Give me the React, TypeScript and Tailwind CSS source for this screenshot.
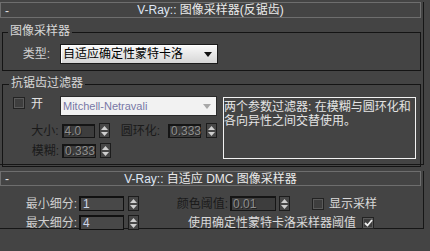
import React from "react";

const FONT = { fontFamily: '"Liberation Sans", "Noto Sans CJK SC", sans-serif' };

function SpinBtn() {
  return (
    <div className="w-[11px] h-[15px] border border-[#1c1c1c] bg-[#474747] flex flex-col items-center justify-center gap-[2px]">
      <svg width="7" height="4" viewBox="0 0 7 4">
        <polygon points="3.5,0 7,4 0,4" fill="#cfcfcf" />
      </svg>
      <svg width="7" height="4" viewBox="0 0 7 4">
        <polygon points="0,0 7,0 3.5,4" fill="#cfcfcf" />
      </svg>
    </div>
  );
}

function Arrow({ color }: { color: string }) {
  return (
    <svg width="8" height="5" viewBox="0 0 8 5">
      <polygon points="0,0 8,0 4,5" fill={color} />
    </svg>
  );
}

function CheckBox({ checked }: { checked?: boolean }) {
  return (
    <div className="w-[12px] h-[12px] border border-[#222] bg-[#3e3e3e] shadow-[inset_1px_1px_0_#5a5a5a,inset_-1px_-1px_0_#5a5a5a] flex items-center justify-center">
      {checked && (
        <svg width="9" height="8" viewBox="0 0 9 8">
          <polyline points="1,4 3.5,6.5 8,1" fill="none" stroke="#f0f0f0" strokeWidth="1.8" />
        </svg>
      )}
    </div>
  );
}

const dis = "text-[#1a1a1a]";

export default function App() {
  return (
    <div
      className="w-[430px] h-[251px] bg-[#444444] overflow-hidden text-[12px] leading-none text-[#d8d8d8]"
      style={FONT}
    >
      {/* Rollout 1 */}
      <div className="mt-[10px] w-[424px] h-[163px] border-r border-b border-[#161616]">
        <div className="-mt-[8px] w-[421px] h-[16px] border border-[#6e6e6e] relative flex items-center justify-center">
          <span className="absolute left-[4px] top-[2px] text-[#e0e0e0]">-</span>
          <span className="text-[#eaeaea]">
            <span className="text-[#dfe6f4]">V-Ray::</span> 图像采样器(反锯齿)
          </span>
        </div>

        {/* Group 1 */}
        <div className="ml-[2px] mt-[14px] w-[419px] h-[39px] border border-[#141414] relative">
          <span className="absolute -top-[8px] left-[5px] px-[2px] bg-[#444444] text-[#d8d8d8]">图像采样器</span>
          <div className="mt-[11px] flex items-center">
            <span className="w-[47px] text-right text-[#cfcfcf]">类型:</span>
            <div className="ml-[10px] w-[158px] h-[20px] border border-[#1a1a1a] bg-gradient-to-b from-[#fafafa] to-[#d6d6d6] flex items-center justify-between pl-[2px] pr-[5px] text-black shadow-[inset_1px_1px_0_#ffffff]">
              <span>自适应确定性蒙特卡洛</span>
              <Arrow color="#111111" />
            </div>
          </div>
        </div>

        {/* Group 2 */}
        <div className="ml-[2px] mt-[13px] w-[419px] h-[83px] border border-[#141414] relative flex">
          <span className="absolute -top-[8px] left-[6px] px-[2px] bg-[#444444] text-[#d8d8d8]">抗锯齿过滤器</span>
          <div className="w-[214px] flex flex-col">
            <div className="mt-[11px] h-[20px] flex items-start">
              <div className="ml-[10px] mt-[1px]">
                <CheckBox />
              </div>
              <span className="ml-[6px] mt-[2px] text-[#e2e2e2]">开</span>
              <div className="ml-[17px] w-[157px] h-[20px] border border-[#2a2a2a] bg-[#f2f2f2] flex items-center justify-between pl-[2px] pr-[5px] text-[#7878a6] text-[11px]">
                <span>Mitchell-Netravali</span>
                <Arrow color="#a8a8a8" />
              </div>
            </div>
            <div className="mt-[7px] h-[15px] flex items-center">
              <span className={`w-[56px] text-right ${dis}`}>大小:</span>
              <div className="ml-[3px] w-[34px] h-[14px] border-t-2 border-l-2 border-b border-r border-[#151515] bg-[#3d3d3d] flex items-center pl-[1px] text-[#8e8e8e] [text-shadow:1px_1px_0_#222222]">
                4.0
              </div>
              <div className="ml-[4px]">
                <SpinBtn />
              </div>
              <span className={`w-[50px] text-right ${dis}`}>圆环化:</span>
              <div className="ml-[8px] w-[33px] h-[14px] border-t-2 border-l-2 border-b border-r border-[#151515] bg-[#3d3d3d] flex items-center pl-[1px] text-[#8e8e8e] [text-shadow:1px_1px_0_#222222]">
                0.333
              </div>
              <div className="ml-[5px]">
                <SpinBtn />
              </div>
            </div>
            <div className="mt-[5px] h-[15px] flex items-center">
              <span className={`w-[56px] text-right ${dis}`}>模糊:</span>
              <div className="ml-[3px] w-[34px] h-[14px] border-t-2 border-l-2 border-b border-r border-[#151515] bg-[#3d3d3d] flex items-center pl-[1px] text-[#8e8e8e] [text-shadow:1px_1px_0_#222222]">
                0.333
              </div>
              <div className="ml-[4px]">
                <SpinBtn />
              </div>
            </div>
          </div>
          <div className="ml-[6px] mt-[12px] w-[193px] h-[62px] border border-[#f2f2f2] pt-[2px] text-[#e4e4e4] leading-[14px]">
            两个参数过滤器: 在模糊与圆环化和
            <br />
            各向异性之间交替使用。
          </div>
        </div>
      </div>

      {/* Rollout 2 */}
      <div className="mt-[13px] w-[424px] h-[58px] border-r border-b border-[#161616]">
        <div className="-mt-[7px] w-[421px] h-[15px] border border-[#6e6e6e] relative flex items-center justify-center">
          <span className="absolute left-[4px] top-[1px] text-[#e0e0e0]">-</span>
          <span className="text-[#eaeaea]">
            <span className="text-[#dfe6f4]">V-Ray::</span> 自适应 DMC 图像采样器
          </span>
        </div>
        <div className="mt-[10px] h-[15px] flex items-center">
          <span className="w-[77px] text-right text-[#cfcfcf]">最小细分:</span>
          <div className="ml-[2px] w-[45px] h-[15px] border-t-2 border-l-2 border-b border-r border-[#111111] bg-[#484848] flex items-center pl-[2px] text-[#cdd6ea]">
            1
          </div>
          <div className="ml-[4px]">
            <SpinBtn />
          </div>
          <span className={`w-[89px] text-right ${dis}`}>颜色阈值:</span>
          <div className="ml-[2px] w-[46px] h-[15px] border-t-2 border-l-2 border-b border-r border-[#151515] bg-[#3d3d3d] flex items-center pl-[1px] text-[#8e8e8e] [text-shadow:1px_1px_0_#222222]">
            0.01
          </div>
          <div className="ml-[3px]">
            <SpinBtn />
          </div>
          <div className="ml-[22px]">
            <CheckBox />
          </div>
          <span className="ml-[5px] text-[#dadada]">显示采样</span>
        </div>
        <div className="mt-[4px] h-[15px] flex items-center">
          <span className="w-[77px] text-right text-[#cfcfcf]">最大细分:</span>
          <div className="ml-[2px] w-[45px] h-[15px] border-t-2 border-l-2 border-b border-r border-[#111111] bg-[#484848] flex items-center pl-[2px] text-[#cdd6ea]">
            4
          </div>
          <div className="ml-[4px]">
            <SpinBtn />
          </div>
          <span className="w-[217px] text-right text-[#dadada]">使用确定性蒙特卡洛采样器阈值</span>
          <div className="ml-[6px]">
            <CheckBox checked />
          </div>
        </div>
      </div>
    </div>
  );
}
